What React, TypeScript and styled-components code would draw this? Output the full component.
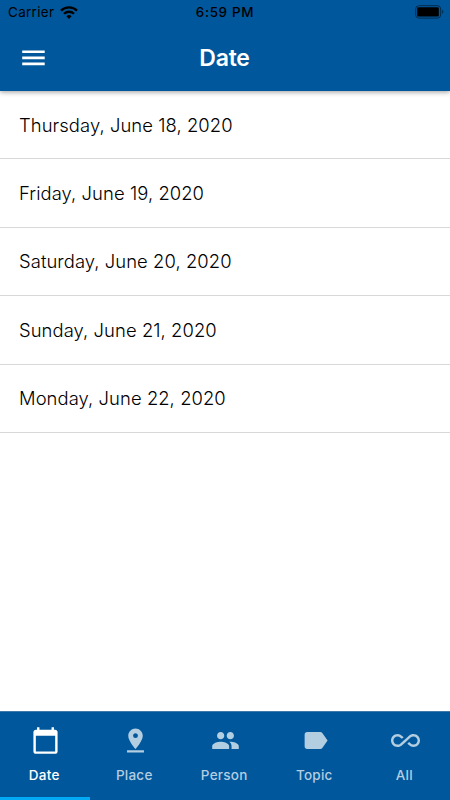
import React from "react";
import styled, { createGlobalStyle } from "styled-components";
import { MdCalendarToday, MdPinDrop, MdPeople, MdLabel, MdAllInclusive } from "react-icons/md";

const Global = createGlobalStyle`
  * { box-sizing: border-box; }
  body { margin: 0; background: #fff; font-family: Inter, sans-serif; }
`;
const Screen = styled.div`
  width: 450px; height: 800px; display: flex; flex-direction: column; overflow: hidden; background: #fff;
`;
const Header = styled.header`
  height: 91px; flex: none; background: #01579b; color: #fff;
  box-shadow: 0 1px 5px rgba(0,0,0,.4); z-index: 1;
`;
const StatusBar = styled.div`
  height: 24px; padding: 0 6px 0 8px; display: grid; grid-template-columns: 1fr auto 1fr; align-items: center;
  color: #000; font-size: 13.4px; letter-spacing: .35px;
`;
const Carrier = styled.span` display: flex; align-items: center; gap: 6px; `;
const Clock = styled.span` font-weight: 500; letter-spacing: .7px; margin-right: 2px; `;
const Battery = styled.svg` justify-self: end; `;
const TitleBar = styled.div`
  height: 67px; display: grid; grid-template-columns: 67px 1fr 67px; align-items: center; justify-items: center;
`;
const Title = styled.h1` margin: 0 1px 0 0; font-size: 23px; font-weight: 600; letter-spacing: -.25px; `;
const List = styled.ul` flex: 1; margin: 0; padding: 0; list-style: none; `;
const Row = styled.li`
  height: 68.4px; padding: 0 19px; display: flex; align-items: center; border-bottom: 1px solid #d8d8d8;
  font-size: 18.4px; font-weight: 300; letter-spacing: .08px; color: #000;
`;
const Tabs = styled.nav`
  height: 89px; flex: none; display: grid; grid-template-columns: repeat(5, 1fr); background: #01579b;
  border-top: 1px solid #3f79aa;
`;
const Tab = styled.button<{ $active?: boolean }>`
  border: 0; padding: 14px 0 0; background: none; display: flex; flex-direction: column; align-items: center; gap: 9.5px;
  font: 500 13.5px/20px Inter, sans-serif; letter-spacing: .25px; color: ${p => p.$active ? "#fff" : "#b3cde1"};
  border-bottom: 3px solid ${p => p.$active ? "#03a9f4" : "transparent"};
`;
const TabLabel = styled.span` padding-right: 1.5px; `;
const days = ["Thursday, June 18, 2020", "Friday, June 19, 2020", "Saturday, June 20, 2020", "Sunday, June 21, 2020", "Monday, June 22, 2020"];
const tabs = [["Date", MdCalendarToday], ["Place", MdPinDrop], ["Person", MdPeople], ["Topic", MdLabel], ["All", MdAllInclusive]] as const;

export default function App() {
  return <><Global /><Screen>
    <Header>
      <StatusBar>
        <Carrier>Carrier
          <svg width="18" height="13" viewBox="0 0 18 13" fill="none" stroke="currentColor" strokeWidth="2.3">
            <path d="M1 4.6a11.3 11.3 0 0 1 16 0M4 7.8a7.1 7.1 0 0 1 10 0" /><path d="M9 13 6.4 10.3a3.7 3.7 0 0 1 5.2 0z" fill="currentColor" stroke="none" />
          </svg>
        </Carrier>
        <Clock>6:59 PM</Clock>
        <Battery width="29" height="14" viewBox="0 0 29 14"><rect x=".7" y=".7" width="25" height="12.4" rx="3.2" fill="none" stroke="currentColor" opacity=".5" /><rect x="2.2" y="2.2" width="21.6" height="9.4" rx="1.3" fill="currentColor" /><path d="M27.2 4.8q2.4 2 0 4.2z" fill="currentColor" opacity=".5" /></Battery>
      </StatusBar>
      <TitleBar>
        <svg width="23" height="16" viewBox="0 0 23 16" fill="currentColor"><path d="M.2.4h22.5v2.7H.2zM.2 6.5h22.5v2.7H.2zM.2 12.6h22.5v2.7H.2z" /></svg>
        <Title>Date</Title>
      </TitleBar>
    </Header>
    <List>{days.map(d => <Row key={d}>{d}</Row>)}</List>
    <Tabs>{tabs.map(([n, Icon], i) => <Tab key={n} $active={i === 0}><Icon size={29} /><TabLabel>{n}</TabLabel></Tab>)}</Tabs>
  </Screen></>;
}
